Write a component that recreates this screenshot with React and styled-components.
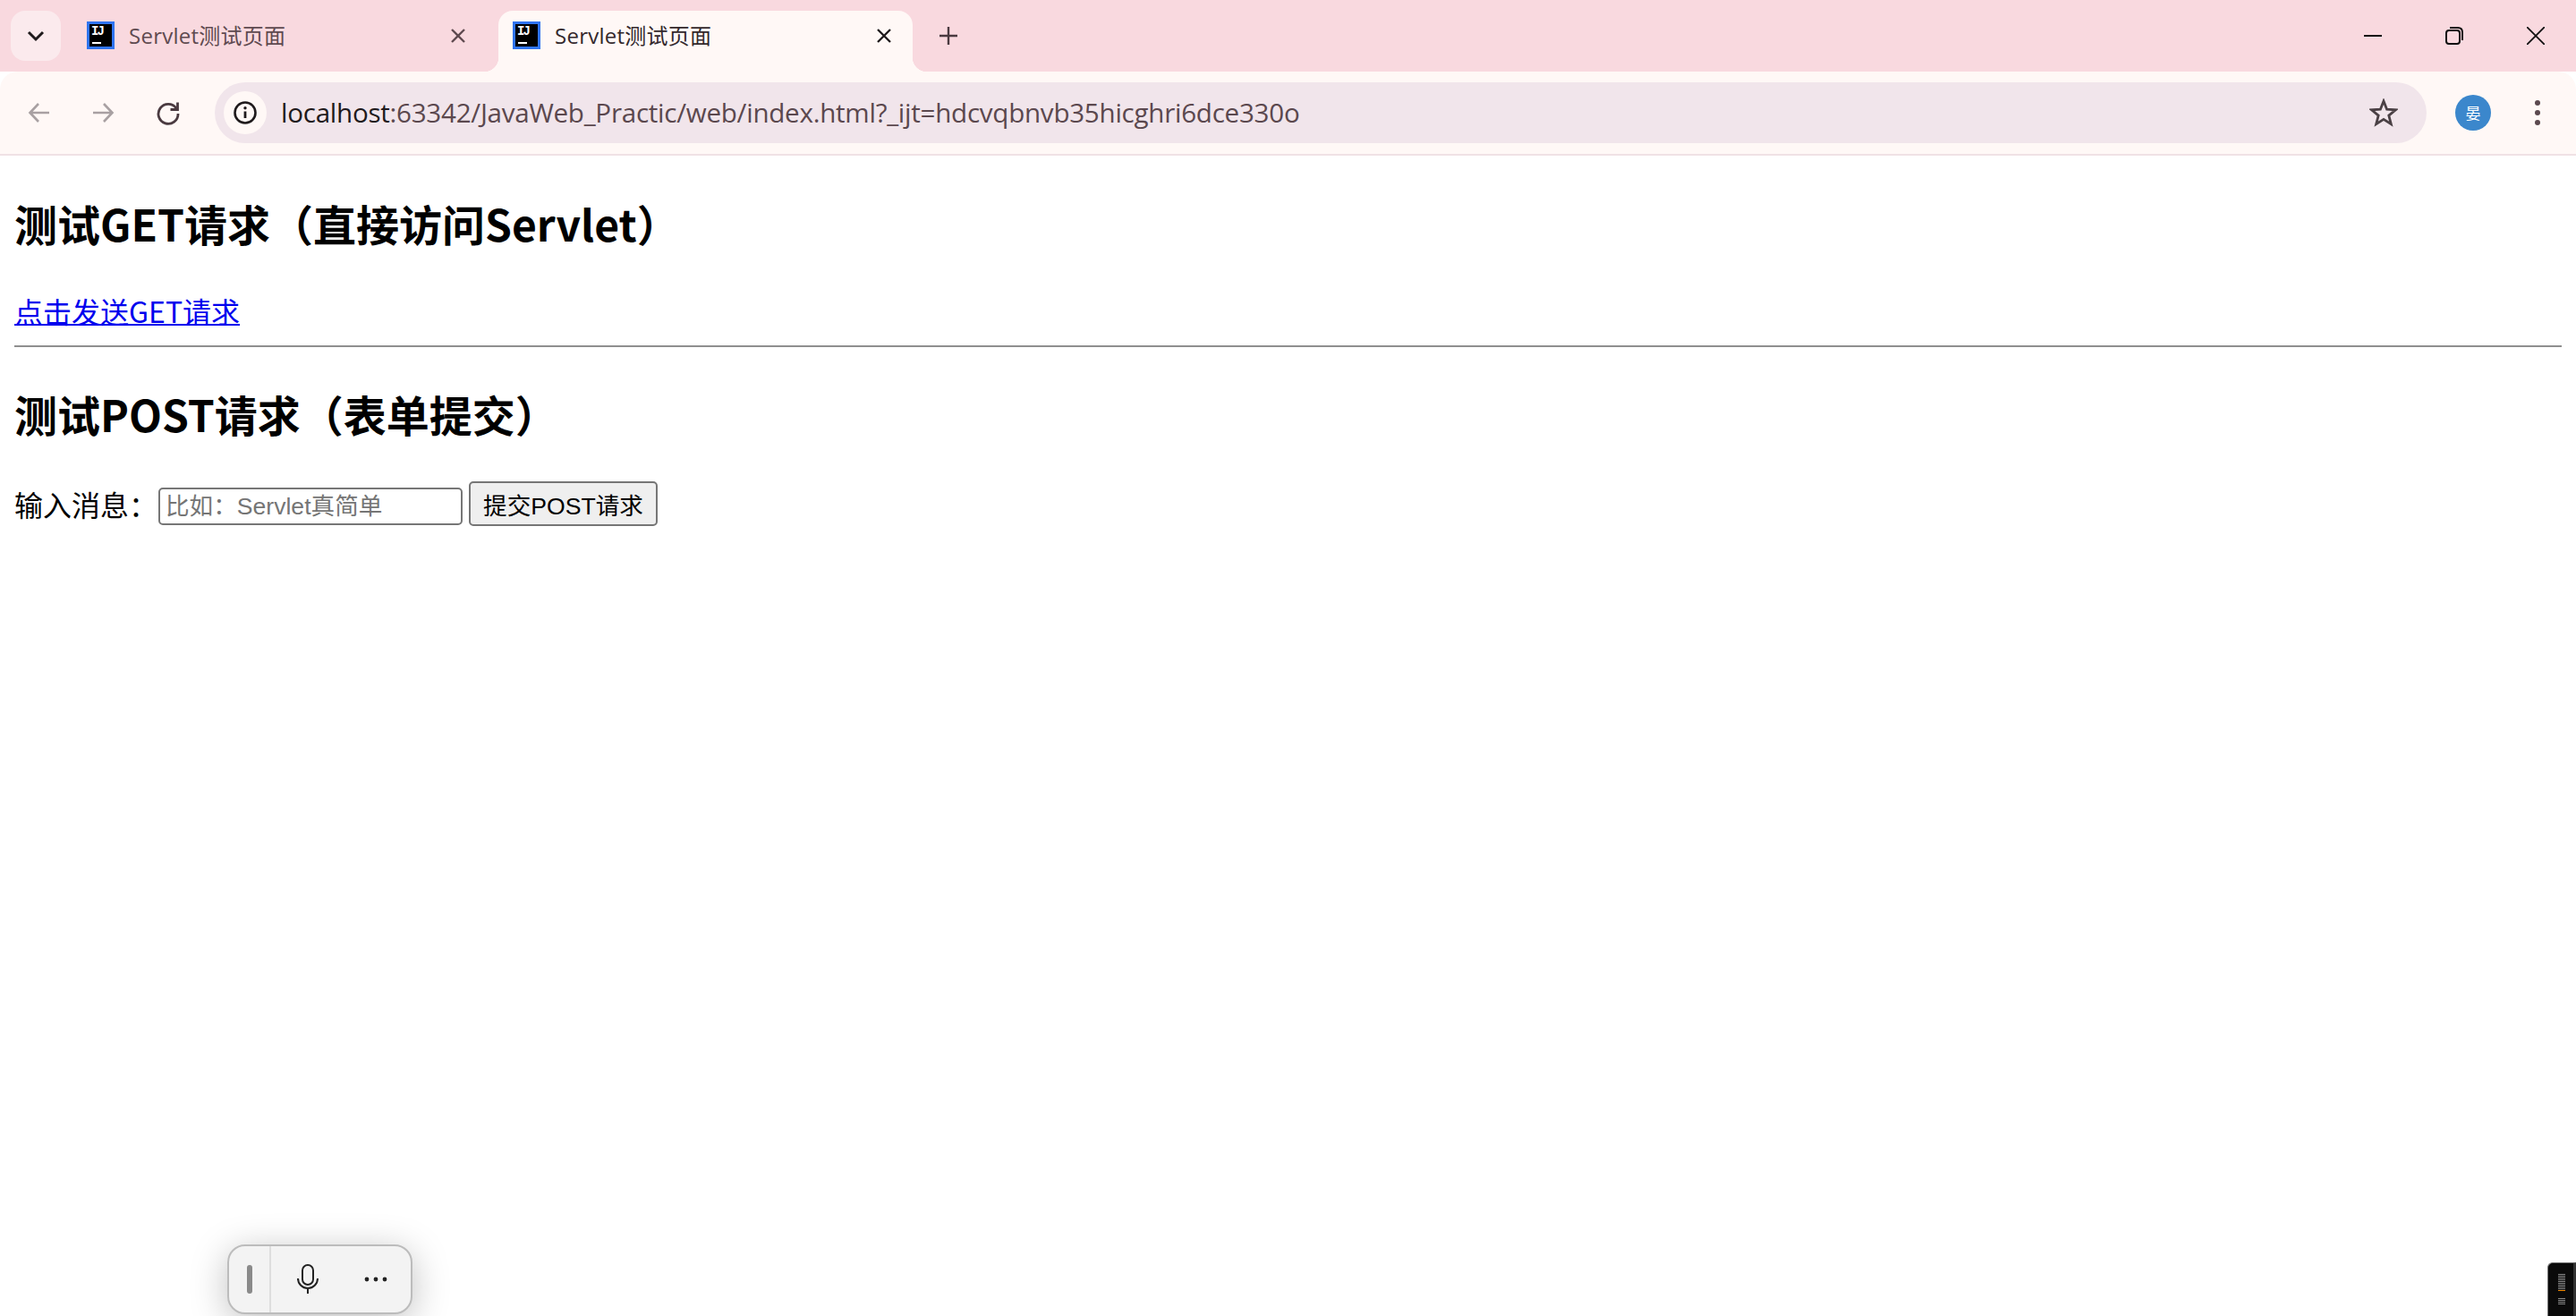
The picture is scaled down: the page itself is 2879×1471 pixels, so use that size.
import React from 'react';
import styled, { createGlobalStyle } from 'styled-components';

const GlobalStyle = createGlobalStyle`
  html, body {
    margin: 0;
    padding: 0;
    background: #fff;
  }
`;

const cjk = '"Noto Sans CJK SC", "Noto Sans", sans-serif';
const uiFont = '"Open Sans", "Noto Sans CJK SC", sans-serif';
const formFont = '"Liberation Sans", "Noto Sans CJK SC", sans-serif';

const Screen = styled.div`
  position: relative;
  width: 100%;
  height: 100vh;
  overflow: hidden;
  background: #fff;
`;

const TabStrip = styled.div`
  display: flex;
  align-items: flex-end;
  height: 80px;
  padding-left: 12px;
  background: #f9d9df;
`;

const TabSearch = styled.div`
  display: flex;
  align-items: center;
  justify-content: center;
  width: 56px;
  height: 56px;
  margin-bottom: 12px;
  margin-right: 13px;
  border-radius: 16px;
  background: #fbeaed;
`;

const Tab = styled.div`
  position: relative;
  display: flex;
  align-items: center;
  box-sizing: border-box;
  width: 463px;
  height: 68px;
  margin-right: 13px;
  padding: 0 16px 13px;
  border-radius: 16px 16px 0 0;
  background: ${props => props.active ? '#fff8f6' : 'transparent'};
  color: ${props => props.active ? '#33282c' : '#5f4a50'};

  ${props => props.active && `
    &::before, &::after {
      content: '';
      position: absolute;
      bottom: 0;
      width: 16px;
      height: 16px;
    }
    &::before {
      left: -16px;
      background: radial-gradient(circle at 0 0, transparent 16px, #fff8f6 16.5px);
    }
    &::after {
      right: -16px;
      background: radial-gradient(circle at 100% 0, transparent 16px, #fff8f6 16.5px);
    }
  `}
`;

const Favicon = styled.div`
  position: relative;
  flex: none;
  box-sizing: border-box;
  width: 31px;
  height: 31px;
  border: 3px solid #2f74f0;
  background: #000;
  color: #fff;
  font: bold 14px/13px "Liberation Mono", monospace;
  padding: 2px 0 0 2px;
  letter-spacing: -2px;

  &::after {
    content: '';
    position: absolute;
    left: 3px;
    bottom: 3px;
    width: 10px;
    height: 2px;
    background: #fff;
  }
`;

const TabTitle = styled.span`
  flex: 1;
  margin-left: 16px;
  font: 24px/32px ${uiFont};
  letter-spacing: 0.26px;
`;

const TabClose = styled.svg`
  flex: none;
  width: 18px;
  height: 18px;
  margin-right: 7px;
`;

const NewTab = styled.svg`
  width: 20px;
  height: 20px;
  margin: 0 0 30px 17px;
`;

const WindowControls = styled.div`
  display: flex;
  margin-left: auto;
  margin-bottom: 30px;
  margin-right: 35px;
  gap: 71px;
`;

const Toolbar = styled.div`
  display: flex;
  align-items: center;
  height: 92px;
  box-sizing: border-box;
  padding: 0 0 0 30px;
  border-radius: 20px 20px 0 0;
  background: #fff8f6;
`;

const ToolbarEdge = styled.div`
  height: 2px;
  background: #f0e1e5;
`;

const NavIcon = styled.svg`
  flex: none;
  width: 28px;
  height: 28px;
  margin-right: ${props => props.gap}px;
`;

const Omnibox = styled.div`
  display: flex;
  align-items: center;
  box-sizing: border-box;
  width: 2472px;
  height: 68px;
  padding: 0 32px 0 10px;
  border-radius: 34px;
  background: #f1e5eb;
`;

const InfoBadge = styled.div`
  display: flex;
  align-items: center;
  justify-content: center;
  flex: none;
  width: 48px;
  height: 48px;
  border-radius: 50%;
  background: #fff8f6;
`;

const Url = styled.div`
  flex: 1;
  margin-left: 16px;
  font: 29.6px/40px ${uiFont};
  letter-spacing: -0.27px;
  color: #5b484e;
  white-space: nowrap;

  b {
    font-weight: 400;
    color: #1f1a1c;
  }
`;

const Avatar = styled.div`
  display: flex;
  align-items: center;
  justify-content: center;
  flex: none;
  width: 40px;
  height: 40px;
  margin-left: 32px;
  border-radius: 50%;
  background: #3b87cc;
  color: #fff;
  font: 17px/20px ${cjk};
`;

const MenuDots = styled.svg`
  flex: none;
  width: 8px;
  height: 32px;
  margin-left: 48px;
`;

const Page = styled.main`
  padding: 16px;
  font: 32px/46px ${cjk};
  color: #000;
`;

const Heading = styled.h2`
  margin: 24px 0 40px;
  font: 700 48px/70px ${cjk};

  hr + & {
    margin-top: 8px;
  }
`;

const GetLink = styled.a`
  display: block;
  width: fit-content;
  color: #0000ee;
  text-decoration: underline;
  text-decoration-thickness: 2px;
`;

const Rule = styled.hr`
  height: 2px;
  margin: 16px 0 39px;
  border: none;
  border-top: 2px solid #8f8f8f;
  background: #c4c4c4;
  box-sizing: border-box;
`;

const FormRow = styled.form`
  display: flex;
  align-items: center;
  height: 52px;
`;

const Label = styled.label`
  width: 161px;
  flex: none;
`;

const MessageInput = styled.input`
  box-sizing: border-box;
  width: 340px;
  height: 42px;
  margin: 6px 7px 0 0;
  padding: 0 6px;
  border: 2px solid #767676;
  border-radius: 5px;
  background: #fff;
  font: 26.6px ${formFont};
  outline: none;

  &::placeholder {
    color: #757575;
    opacity: 1;
  }
`;

const SubmitButton = styled.button`
  box-sizing: border-box;
  width: 211px;
  height: 50px;
  padding: 0;
  border: 2px solid #767676;
  border-radius: 5px;
  background: #efefef;
  color: #000;
  font: 26.6px ${formFont};
`;

const VoiceBar = styled.div`
  position: absolute;
  left: 254px;
  bottom: 2px;
  display: flex;
  align-items: center;
  box-sizing: border-box;
  width: 207px;
  height: 78px;
  border: 2px solid #bcbcbc;
  border-radius: 20px;
  background: #f3f3f3;
  box-shadow: 0 8px 40px rgba(0, 0, 0, 0.25);
`;

const DragZone = styled.div`
  display: flex;
  align-items: center;
  justify-content: center;
  align-self: stretch;
  width: 45px;
  border-right: 2px solid #dedede;
`;

const DragHandle = styled.div`
  width: 6px;
  height: 32px;
  border-radius: 3px;
  background: #8a8a8a;
`;

const VoiceIcon = styled.svg`
  flex: none;
  width: 30px;
  height: 34px;
  margin-left: ${props => props.offset}px;
`;

const SideWidget = styled.div`
  position: absolute;
  right: 0;
  bottom: 0;
  box-sizing: border-box;
  width: 32px;
  height: 60px;
  padding: 12px 9px 0 11px;
  border-left: 1px solid #777;
  border-top: 1px solid #777;
  border-right: 3px solid #333;
  border-top-left-radius: 6px;
  background: #0a0a0a;
`;

const Tick = styled.div`
  height: 1px;
  margin-bottom: ${props => props.gapAfter || 1}px;
  background: ${props => props.accent ? '#f08a00' : '#8a8a8a'};
`;

const CloseGlyph = ({ color }) => (
  <TabClose viewBox="0 0 18 18">
    <path d="M2 2 L16 16 M16 2 L2 16" stroke={color} strokeWidth="2.4" fill="none" />
  </TabClose>
);

const tabs = [
  { id: 1, active: false, color: '#5f4a50' },
  { id: 2, active: true, color: '#1f1a1c' },
];

const tickRows = [...Array(14)].map((_, i) => i);

const App = () => (
  <Screen>
    <GlobalStyle />
    <TabStrip>
      <TabSearch>
        <svg width="20" height="20" viewBox="0 0 20 20">
          <path d="M2 6 L10 14 L18 6" stroke="#1f1a1c" strokeWidth="3" fill="none" />
        </svg>
      </TabSearch>
      {tabs.map(tab => (
        <Tab key={tab.id} active={tab.active}>
          <Favicon>IJ</Favicon>
          <TabTitle>Servlet测试页面</TabTitle>
          <CloseGlyph color={tab.color} />
        </Tab>
      ))}
      <NewTab viewBox="0 0 20 20">
        <path d="M10 0 V20 M0 10 H20" stroke="#4a3a40" strokeWidth="2.4" />
      </NewTab>
      <WindowControls>
        <svg width="20" height="20" viewBox="0 0 20 20">
          <path d="M0 10 H20" stroke="#111" strokeWidth="2" />
        </svg>
        <svg width="20" height="20" viewBox="0 0 20 20">
          <rect x="1" y="4" width="15" height="15" rx="3" stroke="#111" strokeWidth="2" fill="none" />
          <path d="M5 1 H14 Q19 1 19 6 V15" stroke="#111" strokeWidth="2" fill="none" />
        </svg>
        <svg width="20" height="20" viewBox="0 0 20 20">
          <path d="M0 0 L20 20 M20 0 L0 20" stroke="#111" strokeWidth="1.8" />
        </svg>
      </WindowControls>
    </TabStrip>
    <Toolbar>
      <NavIcon gap={43} viewBox="0 0 28 28">
        <path d="M25 14 H4 M13 4 L3.5 14 L13 24" stroke="#a8a0a2" strokeWidth="2.6" fill="none" />
      </NavIcon>
      <NavIcon gap={45} viewBox="0 0 28 28">
        <path d="M3 14 H24 M15 4 L24.5 14 L15 24" stroke="#a8a0a2" strokeWidth="2.6" fill="none" />
      </NavIcon>
      <NavIcon gap={38} viewBox="0 0 28 28">
        <path d="M23 9 A11 11 0 1 0 25 15" stroke="#4a3a40" strokeWidth="2.8" fill="none" />
        <path d="M24.5 2.5 V10.5 H16.5" stroke="#4a3a40" strokeWidth="2.8" fill="none" />
      </NavIcon>
      <Omnibox>
        <InfoBadge>
          <svg width="28" height="28" viewBox="0 0 28 28">
            <circle cx="14" cy="14" r="11.5" stroke="#1f1a1c" strokeWidth="2.6" fill="none" />
            <path d="M14 12.5 V20" stroke="#1f1a1c" strokeWidth="2.8" />
            <circle cx="14" cy="8.8" r="1.7" fill="#1f1a1c" />
          </svg>
        </InfoBadge>
        <Url><b>localhost</b>:63342/JavaWeb_Practic/web/index.html?_ijt=hdcvqbnvb35hicghri6dce330o</Url>
        <svg width="32" height="32" viewBox="0 0 32 32">
          <path d="M16 3 L19.6 12.2 L29.5 12.8 L21.8 19.1 L24.3 28.7 L16 23.4 L7.7 28.7 L10.2 19.1 L2.5 12.8 L12.4 12.2 Z" stroke="#4a4044" strokeWidth="2.8" fill="none" />
        </svg>
      </Omnibox>
      <Avatar>晏</Avatar>
      <MenuDots viewBox="0 0 8 32">
        <circle cx="4" cy="5" r="3" fill="#5b484e" />
        <circle cx="4" cy="16" r="3" fill="#5b484e" />
        <circle cx="4" cy="27" r="3" fill="#5b484e" />
      </MenuDots>
    </Toolbar>
    <ToolbarEdge />
    <Page>
      <Heading>测试GET请求（直接访问Servlet）</Heading>
      <GetLink href="#">点击发送GET请求</GetLink>
      <Rule />
      <Heading>测试POST请求（表单提交）</Heading>
      <FormRow>
        <Label>输入消息：</Label>
        <MessageInput placeholder="比如：Servlet真简单" />
        <SubmitButton type="button">提交POST请求</SubmitButton>
      </FormRow>
    </Page>
    <VoiceBar>
      <DragZone>
        <DragHandle />
      </DragZone>
      <VoiceIcon offset={26} viewBox="0 0 30 34">
        <rect x="9" y="1" width="12" height="22" rx="6" stroke="#222" strokeWidth="2" fill="none" />
        <path d="M4 16 A11 11 0 0 0 26 16 M15 27 V33" stroke="#222" strokeWidth="2" fill="none" />
      </VoiceIcon>
      <VoiceIcon offset={46} viewBox="0 0 30 34">
        <circle cx="5" cy="17" r="2.4" fill="#222" />
        <circle cx="15" cy="17" r="2.4" fill="#222" />
        <circle cx="25" cy="17" r="2.4" fill="#222" />
      </VoiceIcon>
    </VoiceBar>
    <SideWidget>
      {tickRows.map(i => (
        <Tick key={i} accent={i === 9} gapAfter={i === 9 ? 8 : 1} />
      ))}
    </SideWidget>
  </Screen>
);

export default App;
